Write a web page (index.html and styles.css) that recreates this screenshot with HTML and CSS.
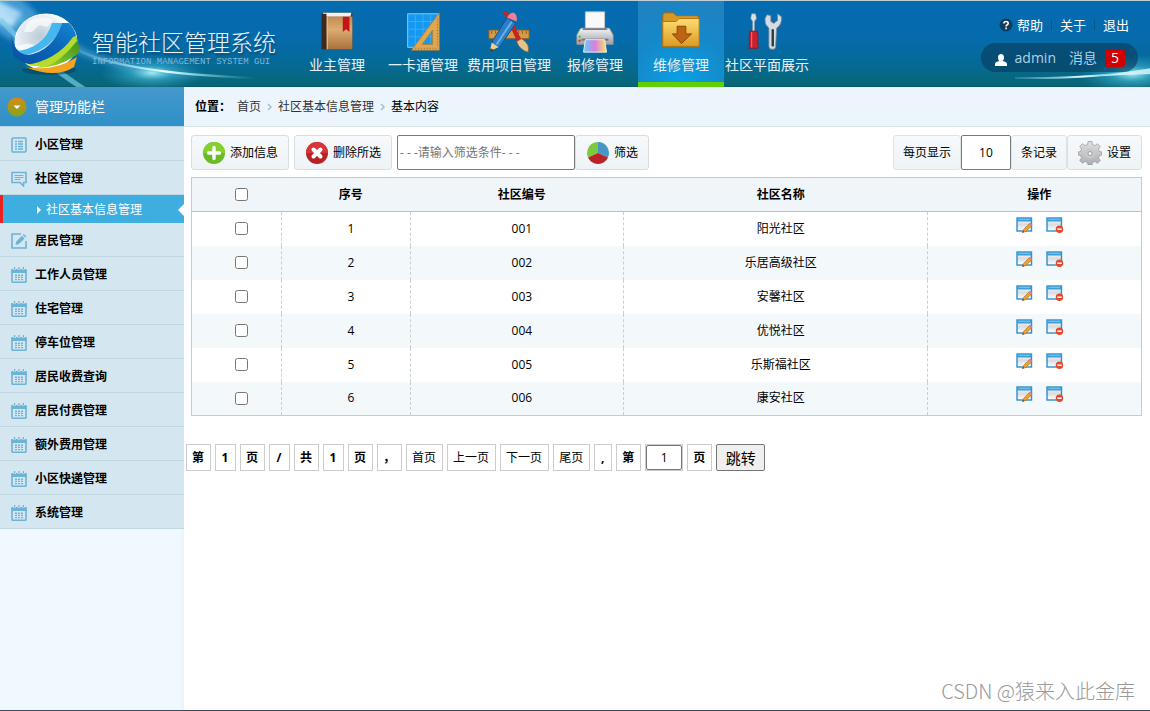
FILE: index.html
```html
<!DOCTYPE html>
<html lang="zh-CN">
<head>
<meta charset="utf-8">
<title>智能社区管理系统</title>
<link rel="stylesheet" href="styles.css">
</head>
<body>
<svg class="defs" width="0" height="0" aria-hidden="true">
  <defs>
    <linearGradient id="gold" x1="0" y1="0" x2="0" y2="1"><stop offset="0" stop-color="#ffdc72"/><stop offset="1" stop-color="#dc9b22"/></linearGradient>
    <linearGradient id="leather" x1="0" y1="0" x2="0" y2="1"><stop offset="0" stop-color="#c48b50"/><stop offset=".4" stop-color="#dcab72"/><stop offset="1" stop-color="#a9713c"/></linearGradient>
    <linearGradient id="steel" x1="0" y1="0" x2="0" y2="1"><stop offset="0" stop-color="#f4f4f6"/><stop offset="1" stop-color="#9d9fa6"/></linearGradient>
    <linearGradient id="rainbow"><stop offset="0" stop-color="#5fd3f5"/><stop offset=".5" stop-color="#d77ee0"/><stop offset="1" stop-color="#ffe45c"/></linearGradient>
    <linearGradient id="win" x1="0" y1="0" x2="0" y2="1"><stop offset="0" stop-color="#fff"/><stop offset=".5" stop-color="#d9dde0"/><stop offset="1" stop-color="#fff"/></linearGradient>
    <symbol id="i-list" viewBox="0 0 16 16"><rect x="1" y="1" width="14" height="14" rx="1" fill="none" stroke="#6cb3d5" stroke-width="1.6"/><path d="M4 4.5h2M7 4.5h5M4 7h2M7 7h5M4 9.500h2M7 9.500h5M4 12h2M7 12h5" stroke="#6cb3d5" stroke-width="1.3"/></symbol>
    <symbol id="i-chat" viewBox="0 0 16 16"><path d="M1 1.500h14v10h-2.500v3.500l-3.500-3.500H1z" fill="none" stroke="#6cb3d5" stroke-width="1.600"/><path d="M3.500 4.500h9M3.500 6.500h9M3.500 8.500h6" stroke="#6cb3d5"/></symbol>
    <symbol id="i-edit" viewBox="0 0 16 16"><path d="M10 1H1v14h14V8" fill="none" stroke="#6cb3d5" stroke-width="1.600"/><path d="M4.500 12l.8-3.500L11 2.800l2.600 2.600-5.700 5.700zM11.800 2l1-1 2.600 2.600-1 1z" fill="#6cb3d5"/></symbol>
    <symbol id="i-cal" viewBox="0 0 16 16"><path d="M1 4h14v10.500q0 .7-.7.700H1.700q-.7 0-.7-.700z" fill="none" stroke="#6cb3d5" stroke-width="1.600"/><path d="M.3 2h2a1.300 1.300 0 0 0 2.600 0h1.800a1.300 1.300 0 0 0 2.600 0h1.800a1.300 1.300 0 0 0 2.600 0h2v4H.3zM3 0h1.200v2.400H3zM7.400 0h1.200v2.400H7.400zM11.800 0H13v2.400h-1.200z" fill="#6cb3d5"/><path d="M4 8.200h2M7 8.200h2M10 8.200h2M4 10.400h2M7 10.400h2M10 10.400h2M4 12.600h2M7 12.600h2M10 12.600h2" stroke="#6cb3d5" stroke-width="1.400"/></symbol>
    <symbol id="i-rowedit" viewBox="0 0 18 16"><rect x="1" y="1" width="14.500" height="13" fill="url(#win)" stroke="#2d8fcb" stroke-width="1.400"/><path d="M1 1h14.500v3.500H1z" fill="#3d9fd9"/><path d="M2.500 2.300h11.500" stroke="#8fd0f2" stroke-width=".8"/><path d="M6.500 15.500l1-3 6-6 2.300 2.200-6 5.800z" fill="#f2a02c" stroke="#a8641a" stroke-width=".6"/><path d="M13 7l1.200-1.200 2.300 2.200-1.200 1.200z" fill="#c77fa8"/><path d="M6.300 15.700l.6-1.800 1.300 1.200z" fill="#333"/></symbol>
    <symbol id="i-rowdel" viewBox="0 0 18 16"><rect x="1" y="1" width="14.500" height="13" fill="url(#win)" stroke="#2d8fcb" stroke-width="1.400"/><path d="M1 1h14.500v3.500H1z" fill="#3d9fd9"/><path d="M2.500 2.300h11.500" stroke="#8fd0f2" stroke-width=".8"/><circle cx="13.500" cy="12.200" r="3.700" fill="#e5482c"/><path d="M11.300 12.200h4.400" stroke="#fff" stroke-width="1.500"/></symbol>
  </defs>
</svg>

<header class="header">
  <svg class="glow glow-left" viewBox="0 0 280 86" aria-hidden="true">
    <defs>
      <filter id="soft" x="-20%" y="-20%" width="140%" height="140%"><feGaussianBlur stdDeviation="2.500"/></filter>
      <filter id="fine" x="-20%" y="-20%" width="140%" height="140%"><feGaussianBlur stdDeviation=".7"/></filter>
      <linearGradient id="beam"><stop offset="0" stop-color="#7fd0f0" stop-opacity=".2"/><stop offset=".5" stop-color="#e4fdff"/><stop offset="1" stop-color="#7fe0f0" stop-opacity="0"/></linearGradient>
      <radialGradient id="flare"><stop offset="0" stop-color="#b4f6ff" stop-opacity=".9"/><stop offset=".4" stop-color="#52cdea" stop-opacity=".45"/><stop offset="1" stop-color="#2cb0d6" stop-opacity="0"/></radialGradient>
    </defs>
    <ellipse cx="10" cy="15" rx="42" ry="20" fill="#68b8ea" opacity=".6" filter="url(#soft)" transform="rotate(35 10 15)"/>
    <path d="M-5-2L22 12 12 27-5 20z" fill="#d4efff" opacity=".8" filter="url(#soft)"/>
    <path d="M0 18Q35 57 90 92" stroke="#7fd0e8" stroke-width="5" fill="none" opacity=".65" filter="url(#fine)"/>
    <path d="M0 6Q70 63 160 74L255 78Q130 74 76 43" fill="#65b9e2" opacity=".5" filter="url(#soft)"/>
    <ellipse cx="152" cy="72" rx="52" ry="18" fill="url(#flare)"/>
    <path d="M76 48Q120 72 255 77" stroke="url(#beam)" stroke-width="2" fill="none" filter="url(#fine)"/>
  </svg>
  <svg class="glow glow-right" viewBox="0 0 140 86" aria-hidden="true">
    <ellipse cx="122" cy="73" rx="54" ry="20" fill="url(#flare)"/>
    <path d="M5 77Q85 78 142 68" stroke="url(#beam)" stroke-width="2" fill="none" filter="url(#fine)"/>
    <path d="M90 75L142 67V73z" fill="#d4f6fd" opacity=".85" filter="url(#fine)"/>
  </svg>

  <div class="brand">
    <svg class="logo" viewBox="0 0 72 66" aria-hidden="true">
      <defs>
        <radialGradient id="globe" cx=".4" cy=".4"><stop offset="0" stop-color="#bccbd6"/><stop offset=".6" stop-color="#dfe9ef"/><stop offset="1" stop-color="#fff"/></radialGradient>
        <linearGradient id="blue" x1="0" y1="1" x2="1" y2="0"><stop offset="0" stop-color="#0a4fa0"/><stop offset=".6" stop-color="#0b67bb"/><stop offset="1" stop-color="#1489d4"/></linearGradient>
        <linearGradient id="green" x1="0" y1="1" x2="1" y2="0"><stop offset="0" stop-color="#b5dc2c"/><stop offset=".5" stop-color="#68b22c"/><stop offset="1" stop-color="#3a8b1c"/></linearGradient>
      </defs>
      <ellipse cx="40" cy="59" rx="27" ry="5" fill="#03395c" opacity=".5"/>
      <ellipse cx="37" cy="31" rx="31" ry="28" fill="url(#globe)" stroke="#fff" stroke-width="1"/>
      <path d="M18 12q12-9 26-3l-6 7-8-2-7 7-8 0zM8 36q12-6 18-1l-10 6z" fill="#fff" opacity=".65"/>
      <path d="M43 12l10 0Q46 39 10 46l-4-6Q35 38 43 12z" fill="#44b8ee"/>
      <path d="M53 12l7 0q6 6 7 13Q50 48 30 54Q12 54 4 44L2 23Q5 43 19 44Q44 40 53 12z" fill="url(#blue)"/>
      <path d="M67 25l4 13q-2 6-7 8Q48 57 27 57Q49 49 67 25z" fill="url(#green)"/>
      <path d="M64 26l3-1 1 5Q52 50 37 56L16 54Q47 50 64 26z" fill="#b3dc2c"/>
      <path d="M68 46l-3 10Q47 68 16 56Q46 61 68 46z" fill="#f3a51d"/>
    </svg>
    <div class="brand-text">
      <div class="brand-title">智能社区管理系统</div>
      <div class="brand-sub">INFORMATION MANAGEMENT SYSTEM GUI</div>
    </div>
  </div>

  <nav class="nav">
    <a href="#" class="nav-item">
      <svg viewBox="0 0 48 48"><path d="M8 4h32v38H8z" fill="#593421"/><path d="M9 4h30l-1 4H11z" fill="#f5f0e8"/><path d="M12 8h28v34H12z" fill="url(#leather)"/><path d="M8 5h5v37H8z" fill="#3c2a22"/><path d="M14 8v34" stroke="#e7bc84"/><path d="M30 8h7v16l-3.500-3L30 24z" fill="#c41616"/></svg>
      <span>业主管理</span></a>
    <a href="#" class="nav-item">
      <svg viewBox="0 0 48 48"><path d="M8 5h32v35H8z" fill="#1598f1" stroke="#88d0f8"/><path d="M16 6v33M24 6v33M32 6v33M9 13h31M9 21h31M9 29h31" stroke="#4fb6f5" stroke-width=".7"/><path fill-rule="evenodd" d="M41 4v39H12zM34 22L23 37h11z" fill="#e0a650" stroke="#b47c2c" stroke-width=".8"/><path d="M39 10v30" stroke="#9c6a24" stroke-dasharray="1 2"/><path d="M16 41h23" stroke="#9c6a24" stroke-dasharray="1 2"/></svg>
      <span>一卡通管理</span></a>
    <a href="#" class="nav-item">
      <svg viewBox="0 0 48 48"><path d="M3 22h42v9H3z" fill="#d69a48" stroke="#8d5c23"/><path d="M6 23v3M10 23v3M14 23v3M34 23v3M38 23v3M42 23v3" stroke="#8d5c23"/><path d="M18 3l4-1 15 30-4 3z" fill="#c9231f"/><path d="M32 34l5-3q9 5 7 14-9-2-12-11z" fill="#e8c48a" stroke="#94602c" stroke-width=".7"/><path d="M22 9l9 6L14 40l-9 3 2-10z" fill="#2a7fc6" stroke="#11538d"/><path d="M27 13L11 37" stroke="#65b2ea" stroke-width="2"/><path d="M22 9q3-6 7-5 4 2 3 9z" fill="#ee7f98"/><path d="M6 35l7 5-9 4z" fill="#f3d089"/><path d="M5 41l3 2-4 1z" fill="#333"/></svg>
      <span>费用项目管理</span></a>
    <a href="#" class="nav-item">
      <svg viewBox="0 0 48 48"><path d="M14 3h20v18H14z" fill="#f9f9fa" stroke="#c4c5cb"/><path d="M9 20h30l4 7v10H5V27z" fill="url(#steel)" stroke="#8f9198" stroke-width=".7"/><path d="M12 20h24l1 2H11z" fill="#777a84"/><path d="M10 31h28v2H10z" fill="#70737d"/><path d="M14 32h20l2 13H12z" fill="url(#rainbow)" stroke="#eee"/><circle cx="8" cy="29" r="1.300" fill="#58c531"/><circle cx="8" cy="33" r="1.300" fill="#db3d25"/></svg>
      <span>报修管理</span></a>
    <a href="#" class="nav-item active">
      <svg viewBox="0 0 48 48"><path d="M5 39V6l2-2h9l3 3h23v32z" fill="#d79921" stroke="#9d6915"/><path d="M5 13h14l3-3h21v29H5z" fill="url(#gold)" stroke="#ad741a"/><path d="M20 18h9v8h6L24.500 36 15 26h5z" fill="#bd6412" stroke="#87430b"/></svg>
      <span>维修管理</span></a>
    <a href="#" class="nav-item">
      <svg viewBox="0 0 48 48"><path d="M8 5h4l1 5-2 3v11H9V13L7 10z" fill="#dce1e6" stroke="#87929c" stroke-width=".6"/><path d="M6 23h8v4l1 4-1 2 1 8H5l1-8-1-2 1-4z" fill="#ce202c" stroke="#820f16" stroke-width=".7"/><path d="M8 24v16" stroke="#f2777b"/><path d="M24 6l4 1v6l3 2 4-3V5l4 3q1 8-5 12l-1 19q0 3-3 3-4 0-4-3V20q-5-4-4-10z" fill="#d5dbe0" stroke="#808a94" stroke-width=".8"/><path d="M30 22v16" stroke="#30363d" stroke-width="2.500" stroke-linecap="round"/></svg>
      <span>社区平面展示</span></a>
  </nav>

  <div class="tools">
    <div class="links">
      <svg class="help" viewBox="0 0 14 14" aria-hidden="true"><circle cx="7" cy="7" r="6.500" fill="#103c60"/><path d="M4.900 5.500Q5 3.500 7 3.500q2.200 0 2.200 1.800 0 1.200-1.200 1.700-.9.400-.9 1.400M7.100 9.500v1.700" fill="none" stroke="#fff" stroke-width="1.600"/></svg>
      <a href="#">帮助</a><a href="#">关于</a><a href="#">退出</a>
    </div>
    <div class="user">
      <svg class="person" viewBox="0 0 14 14" aria-hidden="true"><path d="M7 1q3 0 3 3.500Q10 7 8.500 8q4.500 1 4.500 3v2H1v-2q0-2 4.500-3Q4 7 4 4.500 4 1 7 1z" fill="#fff"/></svg>
      <a href="#">admin</a><a href="#" class="msg">消息<b>5</b></a>
    </div>
  </div>
</header>

<div class="body">
  <aside class="side">
    <h2 class="side-head">
      <svg viewBox="0 0 20 20" aria-hidden="true"><defs><linearGradient id="ball" x1="0" y1="0" x2="0" y2="1"><stop offset="0" stop-color="#d78a12"/><stop offset="1" stop-color="#82a61d"/></linearGradient></defs><circle cx="10" cy="10" r="9.500" fill="url(#ball)"/><path d="M6.500 8.500h7L10 12z" fill="#fff"/></svg>
      管理功能栏</h2>
    <ul class="menu">
      <li><a href="#"><svg><use href="#i-list"/></svg>小区管理</a></li>
      <li><a href="#"><svg><use href="#i-chat"/></svg>社区管理</a>
        <a href="#" class="sub"><i class="caret"></i>社区基本信息管理</a></li>
      <li><a href="#"><svg><use href="#i-edit"/></svg>居民管理</a></li>
      <li><a href="#"><svg><use href="#i-cal"/></svg>工作人员管理</a></li>
      <li><a href="#"><svg><use href="#i-cal"/></svg>住宅管理</a></li>
      <li><a href="#"><svg><use href="#i-cal"/></svg>停车位管理</a></li>
      <li><a href="#"><svg><use href="#i-cal"/></svg>居民收费查询</a></li>
      <li><a href="#"><svg><use href="#i-cal"/></svg>居民付费管理</a></li>
      <li><a href="#"><svg><use href="#i-cal"/></svg>额外费用管理</a></li>
      <li><a href="#"><svg><use href="#i-cal"/></svg>小区快递管理</a></li>
      <li><a href="#"><svg><use href="#i-cal"/></svg>系统管理</a></li>
    </ul>
  </aside>

  <main class="main">
    <div class="crumbs">
      <strong>位置：</strong>
      <a href="#">首页</a>
      <svg viewBox="0 0 5 8"><path d="M1 1l3 3-3 3" fill="none" stroke="#a5bac5" stroke-width="1.400"/></svg>
      <a href="#">社区基本信息管理</a>
      <svg viewBox="0 0 5 8"><path d="M1 1l3 3-3 3" fill="none" stroke="#a5bac5" stroke-width="1.400"/></svg>
      <span>基本内容</span>
    </div>

    <div class="content">
      <div class="toolbar">
        <button type="button" class="btn"><svg viewBox="0 0 24 24"><circle cx="12" cy="12" r="11" fill="#69bc25"/><path d="M1 12a11 11 0 0 1 22 0z" fill="#83d02f"/><path d="M12 6.500v11M6.500 12h11" stroke="#fff" stroke-width="3.400" stroke-linecap="round"/></svg>添加信息</button>
        <button type="button" class="btn"><svg viewBox="0 0 24 24"><circle cx="12" cy="12" r="11" fill="#b52326"/><path d="M1 12a11 11 0 0 1 22 0z" fill="#d93437"/><path d="M8.500 8.500l7 7M15.500 8.500l-7 7" stroke="#fff" stroke-width="4" stroke-linecap="round"/></svg>删除所选</button>
        <form class="filter">
          <input type="text" class="filter-input" aria-label="筛选条件" placeholder="- - -请输入筛选条件- - -">
          <button type="button" class="btn"><svg viewBox="0 0 24 24"><path d="M12 12V1a11 11 0 0 1 10 15.500z" fill="#4796c5"/><path d="M12 12V1A11 11 0 0 0 2 16.500z" fill="#7ccb3f"/><path d="M12 12L2 16.500a11 11 0 0 0 20 0z" fill="#bd2227"/></svg>筛选</button>
        </form>
        <div class="pagesize">
          <label class="cell" for="size">每页显示</label>
          <input type="text" id="size" class="size-input" value="10">
          <span class="cell">条记录</span>
          <button type="button" class="btn set"><svg viewBox="0 0 24 24"><defs><linearGradient id="gear" x1="0" y1="0" x2="0" y2="1"><stop offset="0" stop-color="#dedfe0"/><stop offset="1" stop-color="#acaeb0"/></linearGradient></defs><path d="M10 .5h4l.5 3 2.500 1 2.500-1.800 2.800 2.800L20.500 8l1 2.500 2.500.5v3l-2.500.5-1 2.500 1.800 2.500-2.800 2.800-2.500-1.800-2.500 1-.5 2.500h-4L9.500 21.500 7 20.500l-2.500 1.800-2.800-2.800L3.500 17l-1-2.500L0 14v-3l2.500-.5 1-2.500-1.800-2.500 2.800-2.800L7 4.500l2.500-1z" fill="url(#gear)" stroke="#8b8d90" stroke-width=".6"/><circle cx="12" cy="12.500" r="5" fill="#c7c9ca"/><circle cx="12" cy="12.500" r="2" fill="#f4f6f7" stroke="#8b8d90" stroke-width=".8"/></svg>设置</button>
        </div>
      </div>

      <table class="grid">
        <colgroup><col class="c1"><col class="c2"><col class="c3"><col class="c4"><col class="c5"></colgroup>
        <thead><tr><th><input type="checkbox" aria-label="全选"></th><th>序号</th><th>社区编号</th><th>社区名称</th><th>操作</th></tr></thead>
        <tbody>
          <tr><td><input type="checkbox" aria-label="选择 1"></td><td>1</td><td>001</td><td>阳光社区</td><td><div class="ops"><a href="#" aria-label="编辑"><svg><use href="#i-rowedit"/></svg></a><a href="#" aria-label="删除"><svg><use href="#i-rowdel"/></svg></a></div></td></tr>
          <tr><td><input type="checkbox" aria-label="选择 2"></td><td>2</td><td>002</td><td>乐居高级社区</td><td><div class="ops"><a href="#" aria-label="编辑"><svg><use href="#i-rowedit"/></svg></a><a href="#" aria-label="删除"><svg><use href="#i-rowdel"/></svg></a></div></td></tr>
          <tr><td><input type="checkbox" aria-label="选择 3"></td><td>3</td><td>003</td><td>安馨社区</td><td><div class="ops"><a href="#" aria-label="编辑"><svg><use href="#i-rowedit"/></svg></a><a href="#" aria-label="删除"><svg><use href="#i-rowdel"/></svg></a></div></td></tr>
          <tr><td><input type="checkbox" aria-label="选择 4"></td><td>4</td><td>004</td><td>优悦社区</td><td><div class="ops"><a href="#" aria-label="编辑"><svg><use href="#i-rowedit"/></svg></a><a href="#" aria-label="删除"><svg><use href="#i-rowdel"/></svg></a></div></td></tr>
          <tr><td><input type="checkbox" aria-label="选择 5"></td><td>5</td><td>005</td><td>乐斯福社区</td><td><div class="ops"><a href="#" aria-label="编辑"><svg><use href="#i-rowedit"/></svg></a><a href="#" aria-label="删除"><svg><use href="#i-rowdel"/></svg></a></div></td></tr>
          <tr><td><input type="checkbox" aria-label="选择 6"></td><td>6</td><td>006</td><td>康安社区</td><td><div class="ops"><a href="#" aria-label="编辑"><svg><use href="#i-rowedit"/></svg></a><a href="#" aria-label="删除"><svg><use href="#i-rowdel"/></svg></a></div></td></tr>
        </tbody>
      </table>
    </div>

    <form class="pager">
      <b>第</b><b>1</b><b>页</b><b>/</b><b>共</b><b>1</b><b>页</b><b>，</b>
      <a href="#">首页</a><a href="#">上一页</a><a href="#">下一页</a><a href="#">尾页</a>
      <b>,</b><b>第</b>
      <span class="jump-box"><input type="text" class="jump-input" aria-label="页码" value="1"></span>
      <b>页</b>
      <button type="button" class="jump">跳转</button>
    </form>
    <div class="mark">CSDN @猿来入此金库</div>
  </main>
</div>
</body>
</html>
```
FILE: styles.css
```css
* { box-sizing: border-box; }
body {
  margin: 0;
  min-height: 100vh;
  display: flex;
  flex-direction: column;
  font: 12px/18px "Open Sans", "Noto Sans CJK SC", sans-serif;
  color: #000;
  background: #fff;
  border-top: 1px solid #bcd0da;
  border-bottom: 1px solid #3c4a5a;
}
a { color: inherit; text-decoration: none; }
button, input { font: inherit; color: inherit; }
.defs { position: absolute; }

.header {
  position: relative;
  display: flex;
  height: 86px;
  overflow: hidden;
  color: #fff;
  background: linear-gradient(#056bb0, #066bad 40%, #056a99 70%, #086676 98%, #0a5868);
}
.glow { position: absolute; top: 0; height: 86px; }
.glow-left { left: 0; width: 280px; }
.glow-right { right: 0; width: 140px; }
.brand { position: relative; display: flex; width: 294px; flex: none; padding: 10px 0 0 9px; gap: 11px; }
.logo { width: 72px; height: 66px; flex: none; }
.brand-text { padding-top: 16px; white-space: nowrap; }
.brand-title { font-size: 23px; line-height: 30px; font-weight: 300; color: #e6f6ff; text-shadow: 1px 2px 2px rgba(0, 40, 80, .5); }
.brand-sub { font: 9px/10px "Liberation Mono", monospace; color: #7fb9d8; }

.nav { position: relative; display: flex; flex: none; }
.nav-item {
  width: 86px;
  display: flex;
  flex-direction: column;
  align-items: center;
  padding-top: 8px;
  font-size: 14px;
  line-height: 20px;
  color: #e4f2fa;
  white-space: nowrap;
}
.nav-item svg { width: 48px; height: 46px; flex: none; }
.nav-item.active {
  border-bottom: 5px solid #5fd005;
  background: radial-gradient(circle at 50% 100%, #0aa0e6, #1588c8 55%, #2381be);
}

.tools { position: relative; margin-left: auto; padding: 14px 12px 0 0; display: flex; flex-direction: column; align-items: flex-end; gap: 8px; }
.links { display: flex; align-items: center; font-size: 13px; line-height: 20px; padding-right: 9px; }
.links a { padding: 0 0 0 4px; }
.links a + a { margin-left: 8px; padding-left: 9px; background: linear-gradient(#0b5486, #0b5486) no-repeat left / 1px 10px; }
.help { width: 14px; height: 14px; }
.user {
  display: flex;
  align-items: center;
  height: 29px;
  padding: 0 13px;
  border-radius: 15px;
  background: rgba(6, 58, 92, .6);
  color: #b0d2e4;
  font-size: 14px;
}
.person { width: 14px; height: 14px; margin: 4px 7px 0 0; }
.msg { display: flex; align-items: center; gap: 8px; margin-left: 13px; }
.msg b { width: 20px; line-height: 18px; text-align: center; font-weight: 400; color: #fff; background: #d00000; border-radius: 3px; }

.body { display: flex; flex: 1; }
.side { width: 184px; flex: none; background: linear-gradient(90deg, #f0f9ff 180px, #e8f3fa); }
.side-head {
  display: flex;
  align-items: center;
  gap: 8px;
  margin: 0;
  height: 40px;
  padding-left: 7px;
  font-size: 14px;
  font-weight: 400;
  color: #fff;
  background: linear-gradient(#4499cc, #3090c8);
  border-bottom: 1px solid #b5d5e5;
}
.side-head svg { width: 20px; height: 20px; }
.menu { list-style: none; margin: 0; padding: 0; }
.menu a {
  display: flex;
  align-items: center;
  gap: 8px;
  height: 34px;
  padding: 2px 0 0 11px;
  font-weight: 700;
  background: #d4e7f0;
  border-bottom: 1px solid #c1d8e2;
}
.menu svg { width: 16px; height: 16px; margin-top: 1px; }
.menu .sub {
  position: relative;
  height: 28px;
  gap: 5px;
  padding-left: 34px;
  font-weight: 400;
  color: #fff;
  background: #3eade0;
  border: 0;
  border-left: 3px solid #e92121;
}
.caret { border: 4px solid transparent; border-left-color: #fff; border-right: 0; }
.menu .sub::after { content: ""; position: absolute; right: 0; top: 9px; border: 6px solid transparent; border-right-color: #fff; border-left: 0; }

.main { flex: 1; min-width: 0; position: relative; }
.crumbs {
  display: flex;
  align-items: center;
  gap: 6px;
  height: 40px;
  padding: 1px 0 0 11px;
  color: #333;
  background: #ecf5fc;
  border-bottom: 1px solid #d7e3e8;
}
.crumbs strong, .crumbs span { color: #000; }
.crumbs svg { width: 5px; height: 8px; }

.content { padding: 8px 8px 0 7px; }
.toolbar { display: flex; gap: 5px; height: 35px; margin-bottom: 7px; }
.btn, .cell {
  display: flex;
  align-items: center;
  gap: 4px;
  padding: 0 10px;
  background: linear-gradient(#f7f9fb, #eef3f6);
  border: 1px solid #d8dfe3;
  border-radius: 3px;
  white-space: nowrap;
}
.btn svg { width: 24px; height: 24px; }
.filter { display: flex; }
.filter-input { width: 178px; padding: 0 2px; border: 1px solid #767b80; border-radius: 2px; background: #fff; }
.filter-input::placeholder { color: #757575; opacity: 1; }
.pagesize { display: flex; margin-left: auto; }
.size-input { width: 50px; padding: 0; text-align: center; border: 1px solid #767b80; border-radius: 2px; }
.pagesize .cell { padding: 0 9px; border-color: #dde4e7; }
.btn.set { gap: 5px; }

.grid { width: 100%; table-layout: fixed; border-collapse: collapse; border: 1px solid #c5cbce; text-align: center; }
.c1 { width: 9.5%; }
.c2 { width: 13.5%; }
.c3 { width: 22.5%; }
.c4 { width: 32%; }
.c5 { width: 22.5%; }
.grid th, .grid td { height: 34px; padding: 0 0 0 10px; }
.grid th { background: #eff5f8; border-bottom: 1px solid #b3c5cf; }
.grid td + td { border-left: 1px dashed #c9cfd2; }
.grid tbody tr:nth-child(even) { background: #f3f8fb; }
.grid input { display: block; width: 13px; height: 13px; margin: 0 auto; }
.ops { display: flex; justify-content: center; gap: 12px; padding-bottom: 8px; }
.ops svg { display: block; width: 18px; height: 16px; }

.pager { display: flex; gap: 4px; padding: 28px 0 0 2px; }
.pager b, .pager a, .jump-box { height: 27px; line-height: 25px; padding: 0 6px 0 5px; border: 1px solid #ccc; text-align: center; white-space: nowrap; }
.pager b { min-width: 21px; }
.pager a ~ b { min-width: 18px; }
.pager .jump-box { display: flex; padding: 0; }
.jump-input { width: 36px; padding: 0; text-align: center; border: 1px solid #767676; border-radius: 2px; }
.jump { width: 49px; padding: 0; font-size: 15px; background: #efefef; border: 1px solid #767676; border-radius: 2px; }

.mark { position: absolute; right: 15px; bottom: 6px; font: 300 20px/26px "Noto Sans CJK SC", sans-serif; color: #999; }
```
